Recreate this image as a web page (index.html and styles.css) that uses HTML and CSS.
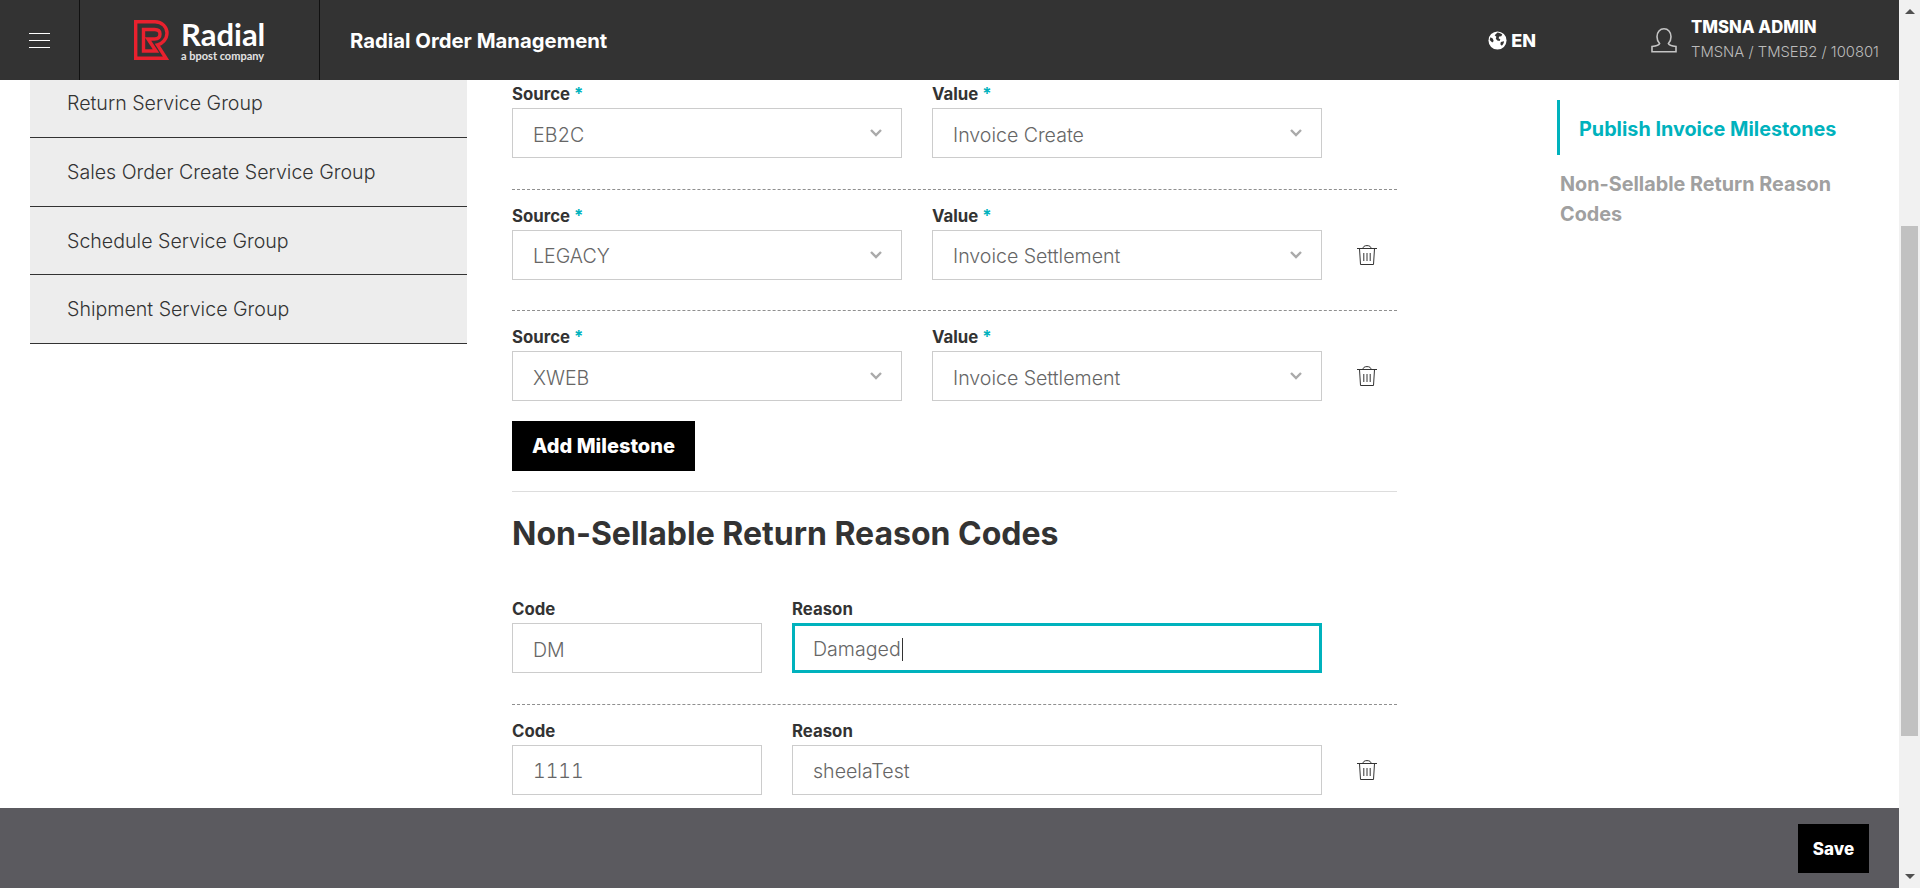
FILE: index.html
```html
<!DOCTYPE html>
<html lang="en">
<head>
    <meta charset="UTF-8">
    <meta name="viewport" content="width=device-width, initial-scale=1.0">
    <title>Radial Order Management</title>
    <link rel="stylesheet" href="styles.css">
</head>
<body>

<div class="app">
    <div class="window">

        <header class="topbar">
            <div class="menu-cell">
                <span class="burger"><i></i><i></i><i></i></span>
            </div>
            <div class="logo-cell">
                <svg class="logo-mark" viewBox="0 0 35 40" width="35" height="40" fill="none" stroke="#e9212e" stroke-width="3.4">
                    <path d="M1.7 1.7H21C28 1.7 33 7 33 13S28 24 23.5 25L32 38.3H1.7Z"/>
                    <path d="M9.5 31V9.5H20.5C24 9.500 26 11 26 14S24 19 20.500 19H14L22 31Z"/>
                </svg>
                <div class="logo-text">
                    <span class="logo-name">Radial</span>
                    <span class="logo-sub">a bpost company</span>
                </div>
            </div>
            <div class="app-title">Radial Order Management</div>
            <div class="lang">
                <svg viewBox="0 0 20 20" width="19" height="19">
                    <circle cx="10" cy="10" r="9.5" fill="#fff"/>
                    <path fill="#333" d="M10 1.5c2 .3 3.6 1 5 2.3l-1 1.7-2.2.2-.6 2 1.8 1.2-.8 1.6-2.4-.5-1.6-1.8.6-2.2L7 4.4zM13.5 11.5l3.4-.6c-.2 1.800-1 3.400-2.300 4.600l-1.600-1.500zM2.500 6.500l2.500 1.500 1 2.500-1.500 1.500-2.700-2.500z"/>
                </svg>
                <span>EN</span>
            </div>
            <div class="user">
                <svg viewBox="0 0 26 26" width="26" height="26" fill="none" stroke="#c4c4c4" stroke-width="1.6">
                    <path d="M8.600 16.500C6.800 14.700 6 12.300 6 9.700 6 5 9 1.800 13 1.800S20 5 20 9.700C20 12.300 19.200 14.700 17.400 16.500 18 18.200 20 18.800 25 19.500V24.800H1V19.500C6 18.800 8 18.200 8.600 16.500Z"/>
                </svg>
                <div class="user-text">
                    <div class="user-name">TMSNA ADMIN</div>
                    <div class="user-org">TMSNA / TMSEB2 / 100801</div>
                </div>
            </div>
        </header>

        <div class="content">
            <ul class="side-menu">
                <li>Return Service Group</li>
                <li>Sales Order Create Service Group</li>
                <li>Schedule Service Group</li>
                <li>Shipment Service Group</li>
            </ul>

            <main class="form-area">
                <div class="form-row first">
                    <div class="field w-half">
                        <label>Source <em>*</em></label>
                        <select><option>EB2C</option></select>
                    </div>
                    <div class="field w-half">
                        <label>Value <em>*</em></label>
                        <select><option>Invoice Create</option></select>
                    </div>
                </div>
                <div class="form-row">
                    <div class="field w-half">
                        <label>Source <em>*</em></label>
                        <select><option>LEGACY</option></select>
                    </div>
                    <div class="field w-half">
                        <label>Value <em>*</em></label>
                        <select><option>Invoice Settlement</option></select>
                    </div>
                    <button class="trash" aria-label="Delete">
                        <svg viewBox="0 0 20 20" width="20" height="20" fill="none" stroke="#333" stroke-width="1"><path d="M0 3.500H20M6 3.500C6 1.500 7.500.6 10 .6S14 1.500 14 3.500M2.500 3.500 3.500 19.500H16.500L17.500 3.500M6.800 8V16M10 8V16M13.200 8V16"/></svg>
                    </button>
                </div>
                <div class="form-row last">
                    <div class="field w-half">
                        <label>Source <em>*</em></label>
                        <select><option>XWEB</option></select>
                    </div>
                    <div class="field w-half">
                        <label>Value <em>*</em></label>
                        <select><option>Invoice Settlement</option></select>
                    </div>
                    <button class="trash" aria-label="Delete">
                        <svg viewBox="0 0 20 20" width="20" height="20" fill="none" stroke="#333" stroke-width="1"><path d="M0 3.500H20M6 3.500C6 1.500 7.500.6 10 .6S14 1.500 14 3.500M2.500 3.500 3.500 19.500H16.500L17.500 3.500M6.800 8V16M10 8V16M13.200 8V16"/></svg>
                    </button>
                </div>

                <button class="btn-add">Add Milestone</button>

                <h2 class="section-title">Non-Sellable Return Reason Codes</h2>

                <div class="form-row">
                    <div class="field w-code">
                        <label>Code</label>
                        <input type="text" value="DM">
                    </div>
                    <div class="field w-reason">
                        <label>Reason</label>
                        <div class="fake-input focused">Damaged<span class="caret"></span></div>
                    </div>
                </div>
                <div class="form-row last">
                    <div class="field w-code">
                        <label>Code</label>
                        <input type="text" value="1111">
                    </div>
                    <div class="field w-reason">
                        <label>Reason</label>
                        <input type="text" value="sheelaTest">
                    </div>
                    <button class="trash" aria-label="Delete">
                        <svg viewBox="0 0 20 20" width="20" height="20" fill="none" stroke="#333" stroke-width="1"><path d="M0 3.500H20M6 3.500C6 1.500 7.500.6 10 .6S14 1.500 14 3.500M2.500 3.500 3.500 19.500H16.500L17.500 3.500M6.800 8V16M10 8V16M13.200 8V16"/></svg>
                    </button>
                </div>
            </main>

            <nav class="anchor-nav">
                <a class="active">Publish Invoice Milestones</a>
                <a>Non-Sellable Return Reason Codes</a>
            </nav>
        </div>

        <footer class="footer">
            <button class="btn-save">Save</button>
        </footer>
    </div>

    <div class="scrollbar">
        <span class="arrow up"></span>
        <span class="thumb"></span>
        <span class="arrow down"></span>
    </div>
</div>

</body>
</html>
```

FILE: styles.css
```css
* {
    box-sizing: border-box;
}

html, body {
    height: 100%;
}

body {
    font-family: Inter, Lato, Arial, sans-serif;
    background-color: white;
    color: #333;
    margin: 0;
    overflow: hidden;
}

.app {
    display: flex;
    height: 888px;
}

.window {
    flex: 1;
    min-width: 0;
    display: flex;
    flex-direction: column;
}

/* top bar */
.topbar {
    height: 80px;
    flex: none;
    display: flex;
    align-items: center;
    background-color: #333;
    color: white;
}

.menu-cell {
    width: 80px;
    height: 100%;
    padding-left: 29px;
    display: flex;
    align-items: center;
    border-right: 1px solid #111;
}

.burger {
    display: flex;
    flex-direction: column;
    gap: 6px;
    width: 21px;
}

.burger i {
    height: 1px;
    background-color: white;
}

.logo-cell {
    width: 240px;
    height: 100%;
    padding-left: 54px;
    display: flex;
    align-items: center;
    gap: 12px;
    border-right: 1px solid #111;
}

.logo-text {
    display: flex;
    flex-direction: column;
}

.logo-name {
    font-family: Lato, Arial, sans-serif;
    font-size: 31px;
    line-height: 30px;
    font-weight: 700;
}

.logo-sub {
    font-family: Lato, Arial, sans-serif;
    font-size: 11px;
    line-height: 13px;
    font-weight: 700;
    color: #e4e4e4;
}

.app-title {
    margin-left: 30px;
    font-size: 20.300px;
    font-weight: 700;
}

.lang {
    margin-left: auto;
    display: flex;
    align-items: center;
    gap: 4px;
    font-size: 18px;
    font-weight: 800;
}

.user {
    width: 248px;
    margin-left: 115px;
    display: flex;
    align-items: center;
    gap: 14px;
}

.user-name {
    font-size: 16.700px;
    line-height: 25px;
    font-weight: 800;
}

.user-org {
    font-size: 14.800px;
    line-height: 25px;
    font-weight: 300;
    color: #bbb;
}

/* page body */
.content {
    flex: 1;
    min-height: 0;
    overflow: hidden;
    display: flex;
    align-items: flex-start;
}

.side-menu {
    list-style-type: none;
    width: 437px;
    flex: none;
    margin: -10.700px 0 0 30px;
    padding: 0;
}

.side-menu li {
    height: 68.700px;
    padding-left: 37px;
    display: flex;
    align-items: center;
    background-color: #ededed;
    border-bottom: 1px solid #333;
    font-size: 19.600px;
    font-weight: 300;
}

.form-area {
    width: 885px;
    flex: none;
    margin-left: 45px;
}

.form-row {
    display: flex;
    align-items: flex-end;
    gap: 30px;
    padding: 12px 0 30.500px;
    border-bottom: 1px dashed #8f8f8f;
}

.form-row.first {
    padding-top: 0;
}

.form-row.last {
    border-bottom: none;
    padding-bottom: 0;
}

.field label {
    display: block;
    height: 28px;
    line-height: 28px;
    font-size: 16.800px;
    font-weight: 700;
}

.field em {
    color: #00b2bd;
    font-style: normal;
}

.w-half {
    width: 390px;
}

.w-code {
    width: 250px;
}

.w-reason {
    width: 530px;
}

select, input, .fake-input {
    display: block;
    width: 100%;
    height: 50px;
    padding: 3px 20px 0;
    border: 1px solid #ccc;
    border-radius: 0;
    background-color: white;
    color: #666;
    font-family: Inter, Lato, Arial, sans-serif;
    font-size: 19.600px;
    font-weight: 300;
    font-variant-numeric: tabular-nums;
}

select {
    appearance: none;
    background-image: url("data:image/svg+xml,%3Csvg xmlns='http://www.w3.org/2000/svg' width='12' height='8'%3E%3Cpath d='M1 1l5 5 5-5' fill='none' stroke='%23aaa' stroke-width='2.400'/%3E%3C/svg%3E");
    background-repeat: no-repeat;
    background-position: right 19px top 20px;
}

.fake-input.focused {
    display: flex;
    align-items: center;
    border: 3px solid #00b2bd;
    padding: 2px 18px 0;
}

.caret {
    width: 1px;
    height: 23px;
    margin-left: 1px;
    background-color: #333;
}

.trash {
    width: 20px;
    height: 50px;
    margin-left: 5px;
    padding: 0;
    display: flex;
    align-items: center;
    background: none;
    border: none;
}

.btn-add, .btn-save {
    display: block;
    background-color: black;
    color: white;
    border: none;
    height: 50px;
    font-family: Inter, Lato, Arial, sans-serif;
    font-size: 20px;
    font-weight: 800;
}

.btn-add {
    width: 183px;
    margin-top: 20px;
}

.section-title {
    margin: 20px 0 0;
    height: 92px;
    padding-top: 22px;
    border-top: 1px solid #ddd;
    font-size: 32px;
    line-height: 40px;
    font-weight: 700;
}

/* right anchors */
.anchor-nav {
    margin: 20px 0 0 163px;
    width: 300px;
    font-size: 19.800px;
    font-weight: 700;
}

.anchor-nav a {
    display: block;
    line-height: 30px;
    color: #a0a0a0;
    padding-top: 14px;
}

.anchor-nav a.active {
    height: 55px;
    padding: 14px 0 0 19px;
    margin-left: -3px;
    border-left: 3px solid #00b2bd;
    color: #00b2bd;
}

/* bottom bar */
.footer {
    height: 80px;
    flex: none;
    padding: 16px 30px 0 0;
    background-color: #5b5a5f;
    display: flex;
    justify-content: flex-end;
}

.btn-save {
    width: 71px;
    height: 49px;
    font-size: 17px;
}

/* scrollbar */
.scrollbar {
    width: 21px;
    flex: none;
    display: flex;
    flex-direction: column;
    align-items: center;
    background-color: #f1f1f1;
}

.arrow {
    width: 0;
    height: 0;
    border-left: 5px solid transparent;
    border-right: 5px solid transparent;
}

.arrow.up {
    margin-top: 9px;
    border-bottom: 5px solid #505050;
}

.arrow.down {
    margin-top: auto;
    margin-bottom: 9px;
    border-top: 5px solid #505050;
}

.thumb {
    width: 17px;
    height: 510px;
    margin-top: 212px;
    background-color: #c1c1c1;
}
```
